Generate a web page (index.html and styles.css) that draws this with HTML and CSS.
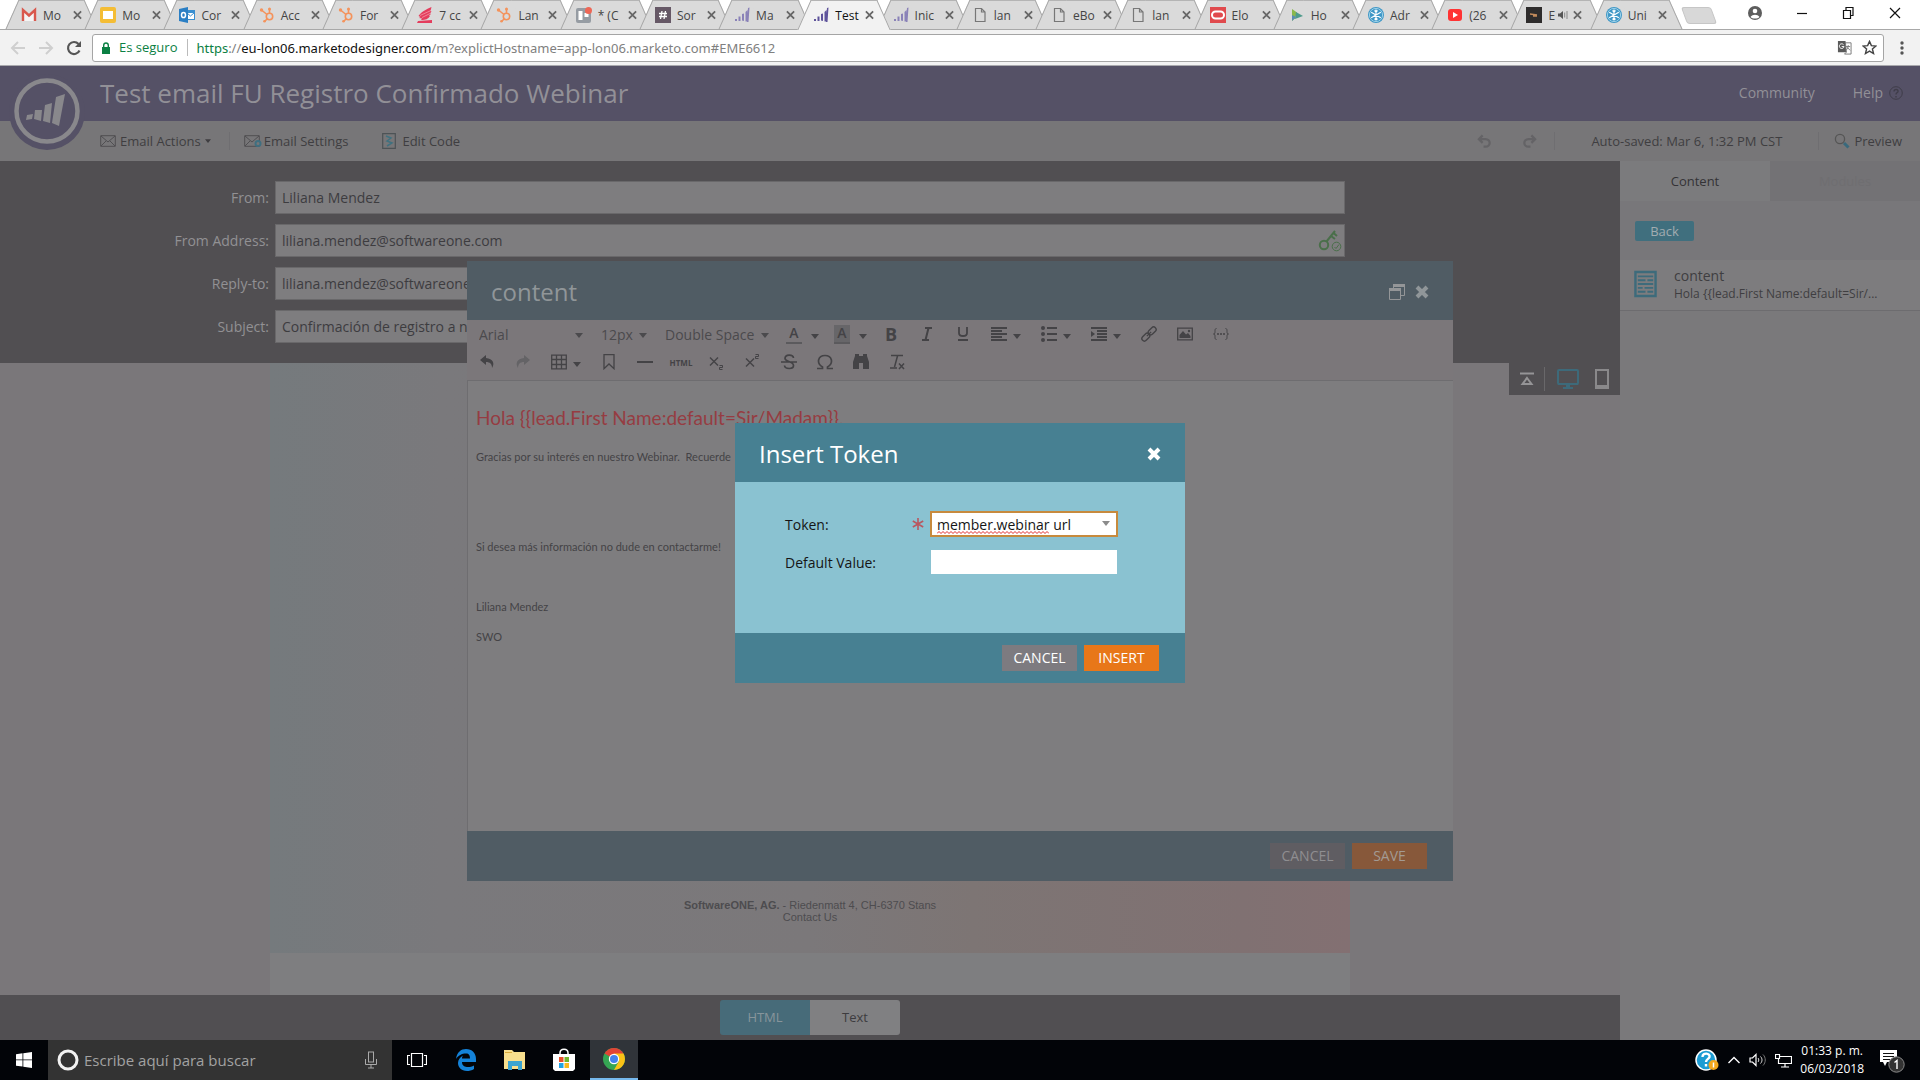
FILE: index.html
```html
<!DOCTYPE html>
<html lang="es">
<head>
<meta charset="utf-8">
<meta name="viewport" content="width=device-width, initial-scale=1">
<title>Test email FU Registro Confirmado Webinar</title>
<link rel="stylesheet" href="styles.css">
</head>
<body>
<svg class="sprite" aria-hidden="true">
  <symbol id="close" viewBox="0 0 10 10"><path d="M1 1l8 8M9 1L1 9" stroke="currentColor" stroke-width="2" fill="none"/></symbol>
  <symbol id="heavy-close" viewBox="0 0 14 14"><path d="M2 2l10 10M12 2L2 12" stroke="currentColor" stroke-width="4" fill="none"/></symbol>
  <symbol id="caret" viewBox="0 0 8 5"><path d="M0 0h8L4 5z" fill="currentColor"/></symbol>
  <symbol id="hubspot" viewBox="0 0 16 16"><g fill="none" stroke="#f4935c" stroke-width="1.6"><circle cx="10.500" cy="9.500" r="3.200"/><path d="M10.500 6V2M8 7.500L2.500 3M8.300 11.700L5.500 14.500"/></g><g fill="#f4935c"><circle cx="10.500" cy="2" r="1.500"/><circle cx="2.500" cy="3" r="1.700"/><circle cx="5.500" cy="14.300" r="1.300"/></g></symbol>
  <symbol id="bars" viewBox="0 0 16 16"><path d="M1 12h2v2H1zM4.500 9.500h2V14h-2zM8 7l2-.5V14l-2-.5zM11.500 5L13.500 3v11l-2 .5zM14 1l1.500-.5L14.500 15h-1.800z" fill="currentColor"/></symbol>
  <symbol id="file" viewBox="0 0 16 16"><path d="M3.500 1.500h6l3.500 3.500v9.500H3.500zM9.500 1.500V5H13" fill="none" stroke="#777" stroke-width="1.200"/></symbol>
  <symbol id="flake" viewBox="0 0 16 16"><circle cx="8" cy="8" r="8" fill="#3f97c6"/><circle cx="8" cy="8" r="6.600" fill="none" stroke="#9bd0e8"/><path d="M8 2.500v11M3.200 5.200l9.600 5.600M12.800 5.200l-9.600 5.600M6.500 3.500L8 5l1.500-1.500M6.500 12.500L8 11l1.500 1.500" stroke="#fff" stroke-width="1.200" fill="none"/></symbol>
  <symbol id="undo-tool" viewBox="0 0 16 16"><path d="M7 1L1 6l6 5V8c4 0 6 2 6 6 3-5 1-9-6-10z" fill="currentColor"/></symbol>
  <symbol id="undo-app" viewBox="0 0 16 16"><path d="M6 1.500L2 5.500l4 4M2.500 5.500H9c6 0 6 8 0 8H7" fill="none" stroke="currentColor" stroke-width="2.400"/></symbol>
  <symbol id="mail" viewBox="0 0 16 12"><path d="M.7.7h14.600v10.600H.7zM1 1l7 6 7-6M1 11l5-5M15 11l-5-5" fill="none" stroke="#504f52"/></symbol>
</svg>

<header class="browser">
  <div class="tabstrip">
    <nav class="tabs" aria-label="Pestañas">
      <div class="tab"><svg class="fav" viewBox="0 0 16 16"><path d="M2 14V3l6 5.500L14 3v11" fill="#f5f5f5" stroke="#d9584d" stroke-width="2.400"/></svg><span class="tab-title">Mo</span><svg class="x"><use href="#close"/></svg></div>
      <div class="tab"><svg class="fav" viewBox="0 0 16 16"><rect width="16" height="16" rx="2" fill="#f4bd35"/><path d="M3 4h10v8H3z" fill="#fff"/></svg><span class="tab-title">Mo</span><svg class="x"><use href="#close"/></svg></div>
      <div class="tab"><svg class="fav" viewBox="0 0 16 16"><path d="M7 3h9v10H7z" fill="#3a8fd0"/><path d="M8 6h7v6H8z" fill="#fff"/><path d="M8 6l3.500 3L15 6" stroke="#3a8fd0" fill="none"/><path d="M0 2l9-2v16l-9-2z" fill="#2b7fc4"/><ellipse cx="4.500" cy="8" rx="2" ry="2.600" fill="none" stroke="#fff" stroke-width="1.500"/></svg><span class="tab-title">Cor</span><svg class="x"><use href="#close"/></svg></div>
      <div class="tab"><svg class="fav"><use href="#hubspot"/></svg><span class="tab-title">Acc</span><svg class="x"><use href="#close"/></svg></div>
      <div class="tab"><svg class="fav"><use href="#hubspot"/></svg><span class="tab-title">For</span><svg class="x"><use href="#close"/></svg></div>
      <div class="tab"><svg class="fav" viewBox="0 0 16 16"><path d="M14.500 0C10 2 5 4 1.500 9l2 1-1.500 1 3 .5L4 13c5 0 7-1 9-4l-1-.5 2-1.500-1-.5 1.500-2-1-.5z" fill="#e43d5d"/><path d="M1 14l14-1v3H0z" fill="#e43d5d"/><path d="M3 8.500l11-5M5 10.500l8-4" stroke="#f6a5b3" stroke-width=".7"/></svg><span class="tab-title">7 cc</span><svg class="x"><use href="#close"/></svg></div>
      <div class="tab"><svg class="fav"><use href="#hubspot"/></svg><span class="tab-title">Lan</span><svg class="x"><use href="#close"/></svg></div>
      <div class="tab"><svg class="fav" viewBox="0 0 16 16"><rect y="1" width="15" height="15" rx="2" fill="#969ca3"/><path d="M2.500 4h4v9h-4zM8.500 6h4v4h-4z" fill="#fff"/><circle cx="12.500" cy="3.500" r="3.500" fill="#ee6756"/></svg><span class="tab-title">* (C</span><svg class="x"><use href="#close"/></svg></div>
      <div class="tab"><svg class="fav" viewBox="0 0 16 16"><path d="M0 0h16v16H0z" fill="#665866"/><path d="M7 4L5.500 12M10.500 4L9 12M4 6.500h8M4 9.500h8" stroke="#fff" stroke-width="1.300"/></svg><span class="tab-title">Sor</span><svg class="x"><use href="#close"/></svg></div>
      <div class="tab"><svg class="fav bars-soft"><use href="#bars"/></svg><span class="tab-title">Ma</span><svg class="x"><use href="#close"/></svg></div>
      <div class="tab tab-active"><svg class="fav bars-strong"><use href="#bars"/></svg><span class="tab-title">Test</span><svg class="x"><use href="#close"/></svg></div>
      <div class="tab"><svg class="fav bars-soft"><use href="#bars"/></svg><span class="tab-title">Inic</span><svg class="x"><use href="#close"/></svg></div>
      <div class="tab"><svg class="fav"><use href="#file"/></svg><span class="tab-title">lan</span><svg class="x"><use href="#close"/></svg></div>
      <div class="tab"><svg class="fav"><use href="#file"/></svg><span class="tab-title">eBo</span><svg class="x"><use href="#close"/></svg></div>
      <div class="tab"><svg class="fav"><use href="#file"/></svg><span class="tab-title">lan</span><svg class="x"><use href="#close"/></svg></div>
      <div class="tab"><svg class="fav" viewBox="0 0 16 16"><path d="M0 0h16v16H0z" fill="#e04a4d"/><rect x="2" y="4.500" width="12" height="7" rx="3.500" fill="none" stroke="#fff" stroke-width="2"/></svg><span class="tab-title">Elo</span><svg class="x"><use href="#close"/></svg></div>
      <div class="tab"><svg class="fav" viewBox="0 0 16 16"><path d="M3 2l5 3.500-2 6L3 14z" fill="#8ab84c"/><path d="M7 5l7 4-8 3z" fill="#4e9b8c"/><path d="M3 8l4 2-4 4z" fill="#5a8bb5"/></svg><span class="tab-title">Ho</span><svg class="x"><use href="#close"/></svg></div>
      <div class="tab"><svg class="fav"><use href="#flake"/></svg><span class="tab-title">Adr</span><svg class="x"><use href="#close"/></svg></div>
      <div class="tab"><svg class="fav" viewBox="0 0 16 16"><rect x="1" y="2" width="14" height="12" rx="3" fill="#f33"/><path d="M6 5l5 3-5 3z" fill="#fff"/></svg><span class="tab-title">(26</span><svg class="x"><use href="#close"/></svg></div>
      <div class="tab"><svg class="fav" viewBox="0 0 16 16"><path d="M0 0h16v16H0z" fill="#2e2c2c"/><path d="M4 7l7 1M7 9h4" stroke="#c18a5b" stroke-width="1.500"/></svg><span class="tab-title tab-title-short">E</span><svg class="sound" viewBox="0 0 10 10"><path d="M0 3.500h2L5 1v8L2 6.500H0z" fill="#555"/><path d="M6.700 2.500v5M9 1v8" stroke="#888"/></svg><svg class="x"><use href="#close"/></svg></div>
      <div class="tab"><svg class="fav"><use href="#flake"/></svg><span class="tab-title">Uni</span><svg class="x"><use href="#close"/></svg></div>
    </nav>
    <button class="new-tab" aria-label="Nueva pestaña"></button>
    <div class="window-controls">
      <svg viewBox="0 0 14 14"><circle cx="7" cy="7" r="7" fill="#5d5d5d"/><circle cx="7" cy="5" r="2.300" fill="#fff"/><path d="M2.500 11c2-3 7-3 9 0-2 2-7 2-9 0z" fill="#fff"/></svg>
      <svg viewBox="0 0 14 14"><path d="M2 7.500h10" stroke="#111" stroke-width="1.200"/></svg>
      <svg viewBox="0 0 14 14"><path d="M2.500 4.500h7v8h-7zM5 4V1.500h7v8H10" fill="none" stroke="#111" stroke-width="1.200"/></svg>
      <svg viewBox="0 0 14 14"><path d="M2 2l10 10M12 2L2 12" stroke="#111" stroke-width="1.200"/></svg>
    </div>
  </div>
  <div class="addressbar">
    <svg class="nav-icon nav-off" viewBox="0 0 16 16"><path d="M15 8H2M8 2L2 8l6 6" fill="none" stroke="currentColor" stroke-width="2"/></svg>
    <svg class="nav-icon nav-off" viewBox="0 0 16 16"><path d="M1 8h13M8 2l6 6-6 6" fill="none" stroke="currentColor" stroke-width="2"/></svg>
    <svg class="nav-icon" viewBox="0 0 16 16"><path d="M13.500 10.500A6 6 0 1 1 12.500 4" fill="none" stroke="currentColor" stroke-width="2.200"/><path d="M15 1v6H9z" fill="currentColor"/></svg>
    <div class="url">
      <svg class="lock" viewBox="0 0 10 12"><path d="M1 5h8v7H1z" fill="#0b8043"/><path d="M2.700 5V3.300a2.300 2.300 0 0 1 4.600 0V5" fill="none" stroke="#0b8043" stroke-width="1.400"/></svg>
      <span class="secure">Es seguro</span>
      <span class="url-text"><span class="scheme">https</span>://<b>eu-lon06.marketodesigner.com</b>/m?explictHostname=app-lon06.marketo.com#EME6612</span>
      <svg class="url-icon" viewBox="0 0 16 16"><path d="M1 1h8l3 12H1z" fill="#5a5a5a"/><path d="M9 3h6v12H8l2-2z" fill="#fff" stroke="#777"/><path d="M7 5a2.500 2.500 0 1 0 .5 2H5" stroke="#fff" fill="none"/><path d="M9.500 7H14M12 5.500c0 3-1 4-2 5M11 8l3 3" stroke="#777" fill="none"/></svg>
      <svg class="url-icon" viewBox="0 0 16 16"><path d="M8 1.500l2 4.500 4.800.4-3.700 3.200 1.200 4.800L8 11.800l-4.300 2.600 1.200-4.800L1.200 6.400 6 6z" fill="none" stroke="#444" stroke-width="1.500"/></svg>
    </div>
    <svg class="menu-icon" viewBox="0 0 4 14"><circle cx="2" cy="2" r="1.700"/><circle cx="2" cy="7" r="1.700"/><circle cx="2" cy="12" r="1.700"/></svg>
  </div>
</header>

<div class="app">
  <header class="app-header">
    <svg class="logo" viewBox="0 0 76 80"><circle cx="38" cy="42" r="38" fill="#555166"/><circle cx="38" cy="41" r="30.500" fill="none" stroke="#89888c" stroke-width="4.500"/><g fill="#89888c"><path d="M18 45l6-1-1 5-6 1z"/><path d="M26 40h7l-1 11-7-2z"/><path d="M36 35l7-2-2 20-7-2z"/><path d="M47 27l9-3-6 32-7-3z"/></g></svg>
    <h1>Test email FU Registro Confirmado Webinar</h1>
    <a class="community" href="#community">Community</a>
    <a href="#help" class="help">Help <svg viewBox="0 0 14 14"><circle cx="7" cy="7" r="6.300" fill="none" stroke="#3f3d49"/><path d="M5 5.500c0-3 4.500-2.500 4 0-.3 1-2 1.200-2 3M7 10v1.500" fill="none" stroke="#3f3d49" stroke-width="1.400"/></svg></a>
  </header>
  <div class="app-toolbar">
    <button class="tool-link"><svg class="mail"><use href="#mail"/></svg>Email Actions <svg class="small-caret"><use href="#caret"/></svg></button>
    <i class="rule"></i>
    <button class="tool-link settings"><svg class="mail-gear" viewBox="0 0 18 14"><path d="M.7 1.700h14.600v10.600H.7zM1 2l7 6 7-6M1 12l5-5" fill="none" stroke="#504f52"/><circle cx="14" cy="9.500" r="2.500" fill="#777678" stroke="#3f6f80" stroke-width="2"/></svg>Email Settings</button>
    <button class="tool-link code"><svg class="code-icon" viewBox="0 0 14 16"><path d="M.7.7h12.600v14.600H.7z" fill="none" stroke="#4d5356" stroke-width="1.200"/><path d="M4 3l5 2-4 3 5 2-5 3" fill="none" stroke="#40717f" stroke-width="1.500"/></svg>Edit Code</button>
    <div class="tool-right">
      <svg class="history"><use href="#undo-app"/></svg>
      <svg class="history flip"><use href="#undo-app"/></svg>
      <i class="rule"></i>
      <span class="saved">Auto-saved: Mar 6, 1:32 PM CST</span>
      <i class="rule"></i>
      <button class="tool-link preview"><svg class="lens" viewBox="0 0 16 16"><circle cx="6" cy="6" r="4.600" fill="none" stroke="#555" stroke-width="1.300"/><path d="M10 10l4.500 4.500" stroke="#39697c" stroke-width="3"/></svg>Preview</button>
    </div>
  </div>

  <div class="workspace">
    <main>
      <form class="mail-form">
        <label for="from">From:</label><input id="from" value="Liliana Mendez">
        <label for="address">From Address:</label>
        <div class="keyed"><input id="address" value="liliana.mendez@softwareone.com"><svg class="key" viewBox="0 0 24 22"><g fill="none" stroke="#4a6f4a"><circle cx="6" cy="15" r="4.200" stroke-width="2"/><path d="M8.500 11.500L17 1M13 6l4 3M15.500 3l3.500 3" stroke-width="2"/><circle cx="18.500" cy="16.500" r="4.300"/><path d="M16.500 17l1.500 1.500 3-4"/></g></svg></div>
        <label for="reply">Reply-to:</label><input id="reply" value="liliana.mendez@softwareone.com">
        <label for="subject">Subject:</label><input id="subject" value="Confirmación de registro a nuestro Webinar">
      </form>
      <section class="canvas">
        <div class="email">
          <div class="email-art">
            <p><b>SoftwareONE, AG.</b> - Riedenmatt 4, CH-6370 Stans<br>Contact Us</p>
          </div>
        </div>
        <div class="device-bar">
          <svg width="16" height="14" viewBox="0 0 16 14"><path d="M1 1.500h14" stroke="#959496" stroke-width="2"/><path d="M8 6l4.500 6h-9z" fill="none" stroke="#959496" stroke-width="2"/></svg>
          <i></i>
          <svg width="22" height="20" viewBox="0 0 22 20"><rect x="1" y="1" width="20" height="14" rx="1" fill="none" stroke="#3d6a7a" stroke-width="2"/><path d="M1 14h20v2H1zM9 16h4v2h3v2H6v-2h3z" fill="#3d6a7a"/></svg>
          <svg width="14" height="20" viewBox="0 0 14 20"><path d="M0 0h14v20H0z" fill="#8a898b"/><path d="M2 2h10v14H2z" fill="#514f52"/></svg>
        </div>
      </section>
      <footer class="view-switch"><button class="view-on">HTML</button><button>Text</button></footer>
    </main>
    <aside>
      <div class="side-tabs"><button class="side-on">Content</button><button>Modules</button></div>
      <div class="back-row"><button class="back">Back</button></div>
      <div class="module">
        <svg viewBox="0 0 24 28"><path d="M1.500 1.500h21v25h-21z" fill="none" stroke="#3d6b7b" stroke-width="2.500"/><path d="M4 6h16M4 10h8M14 10h6M4 14h16M4 18h5M11 18h9M4 22h8M14 22h6" stroke="#3d6b7b" stroke-width="2"/></svg>
        <div><strong>content</strong><span>Hola {{lead.First Name:default=Sir/...</span></div>
      </div>
    </aside>
  </div>

  <div class="layer layer-editor">
    <section class="editor" aria-label="content">
      <header><h2>content</h2><svg class="windows" viewBox="0 0 16 16"><path d="M4.500 5V.500h11v11H12M.5 4.500h11v11H.5z" fill="none" stroke="#949698"/><path d="M4 0h12v3H4zM0 4h12v3H0z" fill="#949698"/></svg><button class="icon-btn" aria-label="Cerrar"><svg class="big-x"><use href="#heavy-close"/></svg></button></header>
      <div class="rte">
        <div class="rte-row">
          <span class="pick"><select aria-label="Font"><option>Arial</option></select><svg class="caret"><use href="#caret"/></svg></span>
          <span class="pick pick-size"><select aria-label="Size"><option>12px</option></select><svg class="caret"><use href="#caret"/></svg></span>
          <span class="pick"><select aria-label="Line spacing"><option>Double Space</option></select><svg class="caret"><use href="#caret"/></svg></span>
          <button class="tb tb-color"><span class="ink">A</span><svg class="caret"><use href="#caret"/></svg></button>
          <button class="tb tb-color"><span class="ink ink-back">A</span><svg class="caret"><use href="#caret"/></svg></button>
          <button class="tb"><b class="glyph">B</b></button>
          <button class="tb"><svg viewBox="0 0 16 16"><path d="M6 2h7M3 14h7M9.500 2l-3 12" fill="none" stroke="currentColor" stroke-width="2"/></svg></button>
          <button class="tb"><svg viewBox="0 0 16 16"><path d="M4 1v6c0 4 8 4 8 0V1M3 14h10" fill="none" stroke="currentColor" stroke-width="1.800"/></svg></button>
          <button class="tb tb-menu"><svg viewBox="0 0 16 16"><path d="M0 2h16M0 5h11M0 8h16M0 11h11M0 14h16" stroke="currentColor" stroke-width="2"/></svg><svg class="caret"><use href="#caret"/></svg></button>
          <button class="tb tb-menu"><svg viewBox="0 0 16 16"><path d="M6 2h10M6 8h10M6 14h10" stroke="currentColor" stroke-width="2"/><g fill="currentColor"><circle cx="2" cy="2" r="2"/><circle cx="2" cy="8" r="2"/><circle cx="2" cy="14" r="2"/></g></svg><svg class="caret"><use href="#caret"/></svg></button>
          <button class="tb tb-menu"><svg viewBox="0 0 16 16"><path d="M0 2h16M6 5h10M6 8h10M6 11h10M0 14h16" stroke="currentColor" stroke-width="2"/><path d="M0 5l4 3-4 3z" fill="currentColor"/></svg><svg class="caret"><use href="#caret"/></svg></button>
          <button class="tb"><svg viewBox="0 0 16 16"><g fill="none" stroke="currentColor" stroke-width="1.400" transform="rotate(-45 8 8)"><rect x="-1" y="5.500" width="9" height="5" rx="2.500"/><rect x="8" y="5.500" width="9" height="5" rx="2.500"/><path d="M5 8h6"/></g></svg></button>
          <button class="tb"><svg viewBox="0 0 16 16"><path d="M.7 2.200h14.600v11.600H.7z" fill="none" stroke="currentColor" stroke-width="1.300"/><path d="M2.500 12V9L6 5l3 3.500L11 7l2.500 3v2z" fill="currentColor"/><circle cx="12" cy="5" r="1.200" fill="currentColor"/></svg></button>
          <button class="tb"><svg viewBox="0 0 16 16"><path d="M3.500 2.500c-3 0 0 5.500-3 5.500 3 0 0 5.500 3 5.500M12.500 2.500c3 0 0 5.500 3 5.500-3 0 0 5.500-3 5.500" fill="none" stroke="currentColor"/><path d="M4 8h2M7 8h2M10 8h2" stroke="currentColor" stroke-width="1.400"/></svg></button>
        </div>
        <div class="rte-row">
          <button class="tb"><svg><use href="#undo-tool"/></svg></button>
          <button class="tb tb-off"><svg class="flip"><use href="#undo-tool"/></svg></button>
          <button class="tb tb-menu"><svg viewBox="0 0 16 16"><path d="M.7 1.200h14.600v13.600H.7zM5.500 1v14M10.500 1v14M1 5.500h14M1 10.500h14" fill="none" stroke="currentColor" stroke-width="1.300"/></svg><svg class="caret"><use href="#caret"/></svg></button>
          <button class="tb"><svg viewBox="0 0 16 16"><path d="M3 .7h10v14L8 10l-5 4.700z" fill="none" stroke="currentColor" stroke-width="1.300"/></svg></button>
          <button class="tb"><svg viewBox="0 0 16 16"><path d="M0 8h16" stroke="currentColor" stroke-width="2"/></svg></button>
          <button class="tb tb-html">HTML</button>
          <button class="tb"><svg viewBox="0 0 16 16"><path d="M1 3.500l8 8M9 3.500l-8 8" fill="none" stroke="currentColor" stroke-width="1.400"/><path d="M10.500 11.500h3v2h-3v2h3" fill="none" stroke="currentColor"/></svg></button>
          <button class="tb"><svg viewBox="0 0 16 16"><path d="M1 4.500l8 8M9 4.500l-8 8" fill="none" stroke="currentColor" stroke-width="1.400"/><path d="M10.500 .5h3v2h-3v2h3" fill="none" stroke="currentColor"/></svg></button>
          <button class="tb"><svg viewBox="0 0 16 16"><path d="M12.500 4C12 0 4 0 4 4.500 4 8 12.500 7 12.500 11.500c0 4-8.500 4-9 0M0 8h16" fill="none" stroke="currentColor" stroke-width="1.700"/></svg></button>
          <button class="tb"><svg viewBox="0 0 16 16"><path d="M0 14.500h5.500V13C-1 9 1 1.500 8 1.500S17 9 10.500 13v1.500H16" fill="none" stroke="currentColor" stroke-width="1.700"/></svg></button>
          <button class="tb"><svg viewBox="0 0 16 16"><path d="M2 0h4v2h4V0h4v2l2 6v7h-6V9H6v6H0V8l2-6z" fill="currentColor"/></svg></button>
          <button class="tb"><svg viewBox="0 0 16 16"><path d="M2 1.500h12M8.500 2l-3 11M1 14h7M10 9.500l5 5.500M15 9.500L10 15" fill="none" stroke="currentColor" stroke-width="1.500"/></svg></button>
        </div>
      </div>
      <div class="letter">
        <p class="hola">Hola {{lead.First Name:default=Sir/Madam}},</p>
        <p>Gracias por su interés en nuestro Webinar.&nbsp; Recuerde</p>
        <p class="after-gap">Si desea más información no dude en contactarme!</p>
        <p class="signature">Liliana Mendez</p>
        <p>SWO</p>
      </div>
      <footer class="actions"><button>CANCEL</button><button class="save">SAVE</button></footer>
    </section>
  </div>

  <div class="layer">
    <form class="token" aria-label="Insert Token">
      <header><h2>Insert Token</h2><button type="button" class="icon-btn" aria-label="Cerrar"><svg class="big-x"><use href="#heavy-close"/></svg></button></header>
      <div class="token-body">
        <label for="token">Token:</label><svg class="star" viewBox="0 0 12 12"><path d="M6 0v12M.8 3l10.400 6M11.200 3L.8 9" stroke="#b9575f" stroke-width="1.600"/></svg>
        <div class="combo"><input id="token" value="member.webinar url" spellcheck="false"><svg class="squiggle" viewBox="0 0 112 3" preserveAspectRatio="none"><path d="M0 2.500l2-2 2 2 2-2 2 2 2-2 2 2 2-2 2 2 2-2 2 2 2-2 2 2 2-2 2 2 2-2 2 2 2-2 2 2 2-2 2 2 2-2 2 2 2-2 2 2 2-2 2 2 2-2 2 2 2-2 2 2 2-2 2 2 2-2 2 2 2-2 2 2 2-2 2 2 2-2 2 2 2-2 2 2 2-2 2 2 2-2 2 2 2-2 2 2 2-2 2 2 2-2 2 2 2-2 2 2 2-2 2 2" fill="none" stroke="#e02a2a"/></svg><svg class="caret"><use href="#caret"/></svg></div>
        <label for="default">Default Value:</label><i></i><input id="default" value="">
      </div>
      <footer class="actions"><button type="button">CANCEL</button><button type="button" class="insert">INSERT</button></footer>
    </form>
  </div>
</div>

<footer class="taskbar">
  <button class="task start" aria-label="Inicio"><svg width="16" height="16" viewBox="0 0 16 16"><path d="M0 2.200l6.500-.9v6.200H0zM7.300 1.200L16 0v7.500H7.300zM0 8.300h6.500v6.300L0 13.700zM7.300 8.300H16V16l-8.700-1.200z" fill="#fff"/></svg></button>
  <label class="search"><svg width="22" height="22" viewBox="0 0 22 22"><circle cx="11" cy="11" r="9" fill="none" stroke="#f2f2f2" stroke-width="3"/></svg><input placeholder="Escribe aquí para buscar" aria-label="Buscar"><svg width="12" height="18" viewBox="0 0 12 18"><rect x="3.500" y="1" width="5" height="10" fill="none" stroke="#aaa"/><path d="M.500 8v5.500h11V8M6 13.500V17M3 17h6" fill="none" stroke="#aaa"/></svg></label>
  <button class="task" aria-label="Vista de tareas"><svg width="20" height="16" viewBox="0 0 20 16"><path d="M4.500 1.500h11v13h-11zM3 3.500H.500v9H3M17 3.500h2.500v9H17" fill="none" stroke="#fff" stroke-width="1.200"/></svg></button>
  <button class="task" aria-label="Edge"><svg width="22" height="22" viewBox="0 0 22 22"><path d="M1 10C2 3 6 0 11 0c6 0 10 4 10 10v3H7c0 4 3 5 6 5 2 0 4 0 6-1.500V20c-2 1.500-5 2-7 2-6 0-9-4-9-8 0-3 2-6 5-7.500-1 1.200-1 2.500-1 3h8c0-3-1-5-4-5-4 0-8 2-10 5.500z" fill="#1482d8"/></svg></button>
  <button class="task" aria-label="Explorador"><svg width="22" height="20" viewBox="0 0 22 20"><path d="M0 0h8l2 2h11v17H0z" fill="#f8df8d"/><path d="M1 2h7v1H1z" fill="#d9a93a"/><path d="M4 11h14v9h-4v-4H8v4H4z" fill="#3ba4d1"/></svg></button>
  <button class="task" aria-label="Store"><svg width="22" height="24" viewBox="0 0 22 24"><path d="M7 7V5c0-5 8-5 8 0v2" fill="none" stroke="#fff" stroke-width="1.500"/><path d="M0 6h22v15l-2 2H2l-2-2z" fill="#fff"/><path d="M6 9h4.500v5H6z" fill="#e8502c"/><path d="M11.500 9H16v5h-4.500z" fill="#72b52d"/><path d="M6 15h4.500v5H6z" fill="#22a3e4"/><path d="M11.500 15H16v5h-4.500z" fill="#fbb81d"/></svg></button>
  <button class="task task-on" aria-label="Chrome"><svg width="22" height="22" viewBox="0 0 22 22"><circle cx="11" cy="11" r="11" fill="#35a553"/><path d="M11 11L1.500 5.500A11 11 0 0 1 20.500 5.500z" fill="#e14335"/><path d="M11 5.500h9.500A11 11 0 0 1 11 22l5-9z" fill="#fbc116"/><circle cx="11" cy="11" r="5.200" fill="#fff"/><circle cx="11" cy="11" r="4" fill="#4381ec"/></svg></button>
  <div class="tray">
    <svg width="24" height="22" viewBox="0 0 24 22"><circle cx="11" cy="11" r="10" fill="#1d9cd3" stroke="#fff" stroke-width="1.500"/><path d="M7.500 8c0-5 8-4 7 0-.5 2-3.500 2-3.500 5M11 15v2.500" fill="none" stroke="#fff" stroke-width="2.400"/><circle cx="18.500" cy="16" r="5" fill="#f5a81d"/><path d="M18.500 13.500v5" stroke="#fff" stroke-width="1.500"/></svg>
    <svg width="14" height="8" viewBox="0 0 14 8"><path d="M1.500 7L7 1.500 12.500 7" fill="none" stroke="#fff" stroke-width="1.400"/></svg>
    <svg width="18" height="14" viewBox="0 0 18 14"><path d="M1 5h2.500L7 1.500v11L3.500 9H1z" fill="none" stroke="#fff" stroke-width="1.200"/><path d="M9 5c1 1 1 3 0 4M11.500 3.500c2 2 2 5 0 7" fill="none" stroke="#ddd"/><path d="M14 1.500c3 3 3 8 0 11" fill="none" stroke="#777"/></svg>
    <svg width="17" height="15" viewBox="0 0 17 15"><path d="M5 3.500h11.500v7H3.500V6M10 10.500v3.500M6 14h8M.500 1.500h4v4h-4z" fill="none" stroke="#fff" stroke-width="1.200"/></svg>
    <div class="clock"><span>01:33 p. m.</span><span>06/03/2018</span></div>
    <svg width="25" height="25" viewBox="0 0 25 25"><path d="M0 2h17v12H7l-2 4-2-4H0z" fill="#fff"/><path d="M3 5.500h11M3 8.500h11M3 11.500h7" stroke="#111"/><circle cx="16.500" cy="16.500" r="7.700" fill="#333" stroke="#888"/><path d="M14.500 14.500l2.500-2v8.500" fill="none" stroke="#fff" stroke-width="1.400"/></svg>
  </div>
</footer>
</body>
</html>
```
FILE: styles.css
```css
* { box-sizing: border-box; }

body {
  margin: 0;
  min-height: 100vh;
  display: flex;
  flex-direction: column;
  font-family: "Open Sans", "Noto Sans", sans-serif;
  font-size: 14px;
}

button, input, select { font: inherit; color: inherit; border: 0; margin: 0; padding: 0; background: none; border-radius: 0; }
h1, h2, p { margin: 0; font-weight: 400; }
svg { display: block; flex: none; }
a { color: inherit; text-decoration: none; }
.sprite { position: absolute; width: 0; height: 0; }
.flip { transform: scaleX(-1); }

/* Browser window */
.browser { overflow: hidden; }
.tabstrip { display: flex; height: 29px; padding-left: 6px; background: #fff; }
.tabs { display: flex; flex: 1; min-width: 0; padding-right: 12px; }
.tab {
  position: relative;
  flex: 1;
  min-width: 0;
  margin-right: -12px;
  padding: 1px 15px 0;
  display: flex;
  align-items: center;
  font-size: 12px;
  color: #444;
}
.tab::before, .tab::after {
  content: "";
  position: absolute;
  z-index: 0;
  top: 0;
  bottom: 0;
  background: #dadada;
  border-top: 1px solid #b4b4b4;
}
.tab::before { left: 6px; right: 40%; transform: skewX(-24deg); border-left: 1px solid #a5a5a5; }
.tab::after { left: 40%; right: 6px; transform: skewX(24deg); border-right: 1px solid #a5a5a5; }
.tab > * { position: relative; z-index: 1; }
.tab-active { z-index: 2; color: #111; }
.tab-active::before, .tab-active::after { bottom: -1px; background: #f2f2f2; }
.fav { width: 16px; height: 16px; }
.tab-title { width: 25px; margin: 0 5px 0 6px; white-space: nowrap; }
.tab-title-short { width: 10px; margin-right: 0; }
.sound { width: 10px; height: 10px; margin-right: 5px; }
.x { width: 9px; height: 10px; color: #666; }
.bars-soft { color: #8a82b8; }
.bars-strong { color: #5f549b; }
.new-tab { flex: none; width: 30px; height: 17px; margin: 7px 1px 0 2px; background: #d8d8d8; border: 1px solid #c6c6c6; border-radius: 3px; transform: skewX(20deg); }
.window-controls { flex: none; display: flex; justify-content: space-between; width: 205px; padding: 6px 18px 0 33px; }
.window-controls svg { width: 14px; height: 14px; }

.addressbar {
  display: flex;
  align-items: center;
  height: 37px;
  padding: 0 16px 0 10px;
  background: #f2f2f2;
  border-top: 1px solid #a8a8a8;
  border-bottom: 1px solid #a9a9ad;
}
.nav-icon { width: 16px; height: 16px; margin-right: 12px; color: #555; }
.nav-off { color: #cfcfcf; }
.url {
  flex: 1;
  display: flex;
  align-items: center;
  height: 28px;
  padding: 0 6px 0 8px;
  background: #fff;
  border: 1px solid #a5a5a5;
  border-radius: 3px;
  color: #808080;
}
.nav-icon + .url { margin-left: -2px; }
.lock { width: 10px; height: 12px; margin-right: 8px; }
.secure { color: #0b8043; font-size: 13px; padding-right: 10px; margin-right: 8px; border-right: 1px solid #bbb; line-height: 17px; }
.url-text { flex: 1; font-family: "Noto Sans", sans-serif; font-size: 13px; }
.url-text b { font-weight: 400; color: #111; }
.scheme { color: #0b8043; }
.url-icon { width: 15px; height: 15px; margin-left: 10px; }
.menu-icon { width: 4px; height: 14px; margin-left: 16px; fill: #555; }

/* Email designer */
.app { position: relative; flex: 1; display: flex; flex-direction: column; background: #777678; color: #3f3e41; }
.app-header {
  display: flex;
  align-items: center;
  height: 55px;
  padding: 0 17px 2px 100px;
  background: #555166;
  color: #929097;
}
.logo { position: absolute; left: 9px; top: 4px; width: 76px; height: 80px; }
.app-header h1 { flex: 1; font-size: 26px; }
.app-header a { display: flex; align-items: center; gap: 6px; }
.community { margin-right: 38px; }
.help svg { width: 14px; height: 14px; }
.app-toolbar { display: flex; align-items: center; height: 40px; padding: 0 18px 0 100px; font-size: 13px; }
.tool-link { display: flex; align-items: center; gap: 4px; }
.mail { width: 16px; height: 12px; }
.small-caret { width: 6px; height: 4px; }
.rule { width: 1px; height: 18px; background: #6f6e71; margin: 0 14px 0 18px; }
.mail-gear { width: 18px; height: 14px; margin-right: -2px; }
.code { margin-left: 34px; gap: 6px; }
.code-icon { width: 14px; height: 16px; }
.tool-right { display: flex; align-items: center; margin-left: auto; }
.history { width: 15px; height: 15px; margin-right: 30px; color: #646366; }
.history + .rule { margin: 0; }
.tool-right .flip { margin-right: 17px; }
.saved { margin: 0 36px; }
.saved + .rule { margin: 0; }
.preview { margin-left: 15px; }
.lens { width: 16px; height: 16px; }

.workspace { flex: 1; display: grid; grid-template-columns: minmax(0, 1fr) 300px; }
main { display: flex; flex-direction: column; min-width: 0; }
.mail-form {
  display: grid;
  grid-template-columns: 1fr minmax(0, 1070px) 1fr;
  gap: 10px 0;
  padding: 20px 0;
  background: #514f52;
  color: #929194;
}
.mail-form label { grid-column: 1; padding-right: 6px; text-align: right; line-height: 33px; }
.mail-form input { width: 100%; height: 33px; padding: 0 6px; background: #7e7d7f; border: 1px solid #69686a; color: #3d3c3f; }
.mail-form > input, .keyed { grid-column: 2; }
.keyed { position: relative; }
.key { position: absolute; right: 3px; top: 6px; width: 24px; height: 22px; }

.canvas { position: relative; flex: 1; display: flex; justify-content: center; background: #7a777a; }
.email { width: 100%; max-width: 1080px; display: flex; flex-direction: column; background: #7e7e80; }
.email-art {
  height: 590px;
  display: flex;
  align-items: flex-end;
  justify-content: center;
  padding-bottom: 30px;
  background: linear-gradient(to right, #757a7d, #7a797c 16%, #7b787a 50%, #7d7574 65%, #807172 90%, #837072);
  text-align: center;
}
.email-art p { font: 11px/12px "Liberation Sans", Arial, sans-serif; color: #4d4c4f; }
.device-bar { position: absolute; top: 0; right: 0; display: flex; align-items: center; height: 32px; padding: 0 11px 0 10px; background: #514f52; }
.device-bar i { width: 1px; height: 24px; margin: 0 12px 0 9px; background: #69686a; }
.device-bar svg:last-child { margin-left: 16px; }
.view-switch { display: flex; justify-content: center; align-items: center; height: 45px; background: #514f52; }
.view-switch button { width: 90px; height: 35px; padding-bottom: 2px; background: #808082; border-radius: 0 3px 3px 0; font-size: 13px; color: #3d3c3f; }
.view-switch .view-on { background: #476b79; border-radius: 3px 0 0 3px; color: #87959b; }

aside { background: #7a797b; }
.side-tabs { display: grid; grid-template-columns: 1fr 1fr; height: 40px; font-size: 13px; background: #737275; }
.side-tabs button { color: #6f6e71; }
.side-tabs .side-on { background: #7b7b7d; color: #343336; }
.back-row { padding: 20px 15px 19px; background: #78777a; }
.back { display: block; width: 59px; height: 20px; background: #406f7e; border-radius: 2px; color: #a1acb1; font-size: 13px; line-height: 18px; }
.module { display: flex; align-items: center; gap: 17px; height: 51px; padding: 0 14px 2px; background: #7d7c7e; border-bottom: 1px solid #6d6c6f; white-space: nowrap; }
.module svg { width: 23px; height: 28px; }
.module strong { display: block; font-weight: 400; font-size: 14px; line-height: 18px; }
.module span { display: block; font-size: 12px; line-height: 17px; }

/* Dialogs */
.layer { position: absolute; inset: 0; display: flex; align-items: center; justify-content: center; }
.layer-editor { padding-top: 36px; }
.editor { width: 986px; color: #444346; }
.editor header, .token header { display: flex; align-items: center; height: 59px; padding: 2px 24px 0; }
.editor header { background: #505c64; color: #909699; }
.layer h2 { flex: 1; font-size: 24px; }
.windows { width: 16px; height: 16px; margin-right: 10px; }
.big-x { width: 14px; height: 14px; }
.rte { height: 61px; padding: 0 2px; background: #7b777a; border-bottom: 1px solid #6e6d70; }
.rte-row { display: flex; height: 28px; }
.pick { position: relative; display: flex; align-items: center; padding-left: 10px; width: 122px; color: #4b4a4d; }
.pick-size { width: 64px; }
.pick select { appearance: none; width: 100%; font-size: 14px; }
.pick .caret { position: absolute; right: 8px; top: 13px; }
.caret { width: 8px; height: 5px; }
.tb { width: 36px; display: flex; align-items: center; justify-content: center; }
.tb svg:first-child { width: 16px; height: 16px; }
.tb-menu { width: 50px; gap: 6px; }
.tb-color { width: 48px; gap: 9px; padding-left: 3px; }
.tb .caret { margin-top: 4px; }
.ink { width: 16px; height: 19px; border-bottom: 2px solid #5b5a5d; font-weight: 600; font-size: 14px; line-height: 16px; }
.ink-back { background: #676669; }
.glyph { font-size: 18px; line-height: 24px; }
.tb-html { font-size: 8px; font-weight: 700; }
.tb-off { color: #646366; }
.letter {
  min-height: 450px;
  padding: 26px 8px;
  background: #7e7d7f;
  border-left: 1px solid #6e6d70;
  font: 11px/18px Lato, "Open Sans", sans-serif;
}
.letter p { margin-bottom: 12px; }
.letter .hola { font-size: 19px; line-height: 22px; margin-bottom: 19px; color: #963c42; }
.letter .after-gap { margin-top: 72px; }
.letter .signature { margin-top: 42px; }
.actions { display: flex; align-items: center; justify-content: flex-end; gap: 7px; height: 50px; padding: 0 26px; background: #505c64; }
.actions button { width: 75px; height: 26px; padding-bottom: 2px; background: #5f5d62; color: #8f8e91; }
.actions .save { background: #87583a; color: #a39a93; }

.token { width: 450px; color: #151515; }
.token header, .token .actions { background: #478092; color: #fff; }
.token-body {
  display: grid;
  grid-template-columns: 127px 18px 188px;
  grid-auto-rows: 26px;
  gap: 12px 0;
  align-content: start;
  align-items: center;
  height: 151px;
  padding: 29px 50px;
  background: #8ac2d1;
}
.star { width: 12px; height: 12px; }
.combo { position: relative; height: 26px; border: 2px solid #c78a3d; background: #fff; }
.token input { width: 100%; padding: 0 6px; background: #fff; }
.combo input { height: 22px; padding: 0 5px; }
.token #default { height: 24px; width: 186px; margin-left: 1px; }
.squiggle { position: absolute; left: 5px; bottom: 1px; width: 112px; height: 3px; }
.combo .caret { position: absolute; right: 6px; top: 8px; color: #8b8b8b; }
.token .actions button { background: #7d7b80; color: #fff; }
.token .actions .insert { background: #e87719; }

/* Windows taskbar */
.taskbar { display: flex; height: 40px; background: #020408; color: #fff; }
.task { width: 49px; display: flex; align-items: center; justify-content: center; }
.start { width: 48px; }
.task-on { margin-left: 2px; width: 48px; background: #303439; border-bottom: 2px solid #76b9ed; }
.search { display: flex; align-items: center; width: 344px; padding: 0 15px 0 9px; background: #333; }
.search input { flex: 1; min-width: 0; margin-left: 5px; font-size: 15px; }
.search input::placeholder { color: #a2a2a2; opacity: 1; }
.tray { display: flex; align-items: center; margin-left: auto; padding-right: 15px; gap: 8px; }
.clock { display: flex; flex-direction: column; align-items: center; font-size: 12px; line-height: 18px; margin-right: 8px; }
```
